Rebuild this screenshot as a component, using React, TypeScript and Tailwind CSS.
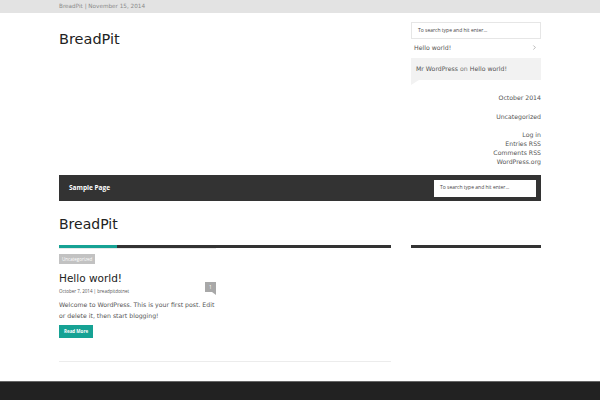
import { ChevronRight } from "lucide-react";

const sans = { fontFamily: '"DejaVu Sans", sans-serif' };
const small = { fontFamily: '"Open Sans", "DejaVu Sans", sans-serif' };

function SearchBox({ className }: { className: string }) {
  return (
    <div className={`flex items-center bg-white px-[6px] text-[5px] text-[#444] ${className}`} style={small}>
      To search type and hit enter...
    </div>
  );
}

export default function App() {
  return (
    <div className="min-h-[400px] flex flex-col bg-white text-[#444]" style={sans}>
      <div className="h-[13px] bg-[#e3e3e3]">
        <div className="w-[482px] mx-auto text-[5.7px] leading-[13px] text-[#8a8a8a]">
          BreadPit | November 15, 2014
        </div>
      </div>

      <div className="w-[482px] mx-auto flex justify-between">
        <h1 className="mt-[17px] text-[14.5px] leading-[18px] text-[#222]">BreadPit</h1>
        <div className="w-[130px] pt-[9px] text-[6.2px]">
          <SearchBox className="h-[17px] border border-[#e6e6e6]" />
          <div className="h-[17px] flex items-center justify-between px-[3px] text-[#555]">
            <span>Hello world!</span>
            <ChevronRight size={7} strokeWidth={1.5} className="text-[#666]" />
          </div>
          <div className="relative mt-[2px] h-[22px] bg-[#f2f2f2] px-[5px] flex items-center text-[#555]">
            <span>Mr WordPress</span>
            <span className="mx-[2px] text-[#777]">on</span>
            <span>Hello world!</span>
            <div className="absolute left-0 top-full w-0 h-0 border-t-[5px] border-t-[#f2f2f2] border-r-[8px] border-r-transparent" />
          </div>
          <div className="mt-[13px] text-right text-[#555] leading-[10px]">October 2014</div>
          <div className="mt-[9px] text-right text-[#555] leading-[10px]">Uncategorized</div>
          <div className="mt-[8px] text-right text-[#555] leading-[9px]">
            <div>Log in</div>
            <div>Entries RSS</div>
            <div>Comments RSS</div>
            <div>WordPress.org</div>
          </div>
        </div>
      </div>

      <div className="w-[482px] mx-auto mt-[9px] h-[26px] bg-[#333] flex items-center justify-between pl-[10px] pr-[5px]">
        <span className="text-white text-[6.5px] font-bold" style={small}>Sample Page</span>
        <SearchBox className="w-[102px] h-[17px]" />
      </div>

      <div className="w-[482px] mx-auto">
        <h2 className="mt-[14px] text-[14px] leading-[18px] text-[#222]">BreadPit</h2>
        <div className="mt-[12px] flex gap-[20px]">
          <div className="w-[332px]">
            <div className="h-[3px] bg-[#333]">
              <div className="h-full w-[58px] bg-[#16a294]" />
            </div>
            <div className="h-px w-[157px] bg-[#e8e8e8]" />
            <div className="mt-[5px] w-fit bg-[#c2c2c2] px-[3px] text-[4.5px] leading-[10px] text-white" style={small}>
              Uncategorized
            </div>
            <div className="w-[157px]">
              <h3 className="mt-[7px] text-[10.5px] leading-[14px] text-[#222]">Hello world!</h3>
              <div className="relative mt-[3px] text-[4.5px] leading-[7px] text-[#555]" style={small}>
                October 7, 2014 | breadpitdotnet
                <div className="absolute right-0 top-[-6px] w-[11px] h-[10px] bg-[#a8a8a8] text-white text-[5px] flex items-center justify-center">
                  1
                  <div className="absolute right-0 top-full w-0 h-0 border-t-[3px] border-t-[#a8a8a8] border-l-[4px] border-l-transparent" />
                </div>
              </div>
              <p className="mt-[4px] text-[6.2px] leading-[11px] text-[#555]">
                Welcome to WordPress. This is your first post. Edit or delete it, then start blogging!
              </p>
              <div className="mt-[4px] w-fit bg-[#16a294] px-[5px] text-[4.5px] leading-[13px] font-bold text-white" style={small}>
                Read More
              </div>
            </div>
            <div className="mt-[23px] h-px bg-[#ececec]" />
          </div>
          <div className="w-[130px]">
            <div className="h-[3px] bg-[#333]" />
          </div>
        </div>
      </div>

      <div className="mt-[19px] flex-1 bg-[#222] border-t border-[#666]" />
    </div>
  );
}
